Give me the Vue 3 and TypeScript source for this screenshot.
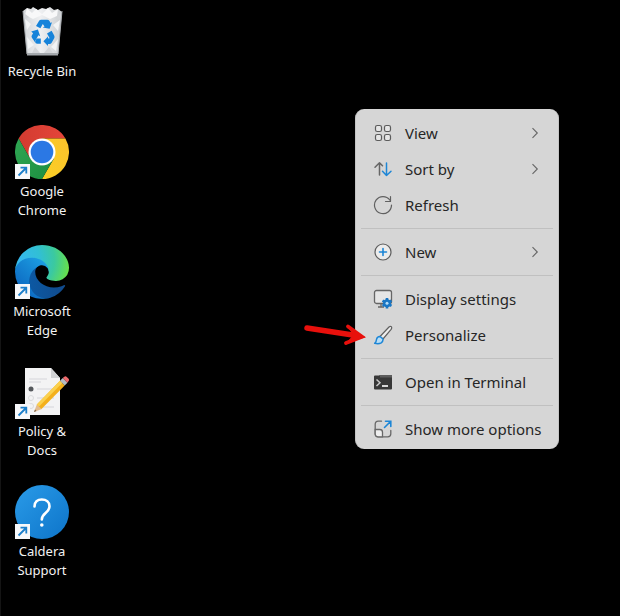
<script setup lang="ts">
interface Shortcut {
  id: string
  label: string
  linked: boolean
}

interface MenuItem {
  id: string
  label: string
  submenu?: boolean
}

const shortcuts: Shortcut[] = [
  { id: 'bin', label: 'Recycle Bin', linked: false },
  { id: 'chrome', label: 'Google Chrome', linked: true },
  { id: 'edge', label: 'Microsoft Edge', linked: true },
  { id: 'docs', label: 'Policy & Docs', linked: true },
  { id: 'support', label: 'Caldera Support', linked: true },
]

const menuGroups: MenuItem[][] = [
  [
    { id: 'view', label: 'View', submenu: true },
    { id: 'sort', label: 'Sort by', submenu: true },
    { id: 'refresh', label: 'Refresh' },
  ],
  [{ id: 'new', label: 'New', submenu: true }],
  [
    { id: 'display', label: 'Display settings' },
    { id: 'personalize', label: 'Personalize' },
  ],
  [{ id: 'terminal', label: 'Open in Terminal' }],
  [{ id: 'more', label: 'Show more options' }],
]
</script>

<template>
  <main class="desktop">
    <nav class="shortcuts">
      <button v-for="s in shortcuts" :key="s.id" type="button" class="shortcut">
        <span class="picture">
          <svg v-if="s.id === 'bin'" viewBox="0 0 54 54" aria-hidden="true">
            <defs>
              <linearGradient id="binBody" x1="0" y1="0" x2="1" y2="0">
                <stop offset="0" stop-color="#d3d6d9" />
                <stop offset=".45" stop-color="#eff0f2" />
                <stop offset="1" stop-color="#cbced1" />
              </linearGradient>
            </defs>
            <path d="M8 6l4-3 4 1 2-2 5 3 4-2 4 1 4-2 4 3 4-1 4 3-4 43H12z" fill="url(#binBody)" />
            <path d="M12 3l5 5 4-4 6 5 6-6 4 5 6-4-1 7-7 3-8-4-9 4-8-4z" fill="#f8f8f9" />
            <path d="M10 14l6 5-4 6zM45 15l-7 5 5 6zM12 32l7 8-6 4zM43 34l-7 8 5 4z" fill="#f3f4f5" />
            <path d="M9 8l5 4-4 2zM46 8l-6 5 5 2zM20 42l5 6h-8zM34 42l-5 6h9z" fill="#d3d5d8" />
            <path d="M8 6l4 43M47 6l-4 43" stroke="#a8acb0" fill="none" />
            <path d="M12 48h31v2.500H12z" fill="#a4a8ac" />
            <g fill="#1683da">
              <path d="M21 21l3-5q.7-1.200 2.200-1.200h6q1.500 0 2.300 1.300l1 1.900 1.500-.8-2.400 6.600-6.800-1.200 1.700-1-1.700-2.600-2.400 4.300z" />
              <path d="M16.200 26.500l6.700-1.900 2.300 6.600-1.800-.9-2.700 4.700q-.8 1.500-.2 3l-3.600-5.200q-.8-1.300 0-2.600l1.200-2z" />
              <path d="M21.500 33.500h4.300v5.300h-3.600q-2 0-2-2z" />
              <path d="M32 28.500l4.600-2.700 2.600 4.600q.8 1.400 0 2.800L36.500 38q-.7 1-2 1H33v2l-4.600-4.800L33 31.400v2l1.700-.2z" />
            </g>
          </svg>

          <svg v-else-if="s.id === 'chrome'" viewBox="0 0 54 54" aria-hidden="true">
            <defs>
              <linearGradient id="crRed" x1="0" y1="0" x2="1" y2="0">
                <stop offset="0" stop-color="#d33b30" />
                <stop offset="1" stop-color="#e4453a" />
              </linearGradient>
              <linearGradient id="crGreen" x1="0" y1="0" x2="1" y2="1">
                <stop offset="0" stop-color="#2fa653" />
                <stop offset="1" stop-color="#1c8e40" />
              </linearGradient>
              <linearGradient id="crYellow" x1="1" y1="0" x2="0" y2="1">
                <stop offset="0" stop-color="#fcc22c" />
                <stop offset="1" stop-color="#fbd024" />
              </linearGradient>
            </defs>
            <path d="M3.600 13.500A27 27 0 0 1 50.400 13.500H27L15.300 33.800z" fill="url(#crRed)" />
            <path d="M50.400 13.500A27 27 0 0 1 27 54L38.700 33.700 27 13.500z" fill="url(#crYellow)" />
            <path d="M27 54A27 27 0 0 1 3.600 13.500L15.300 33.800 27 40.500l11.700-6.800z" fill="url(#crGreen)" />
            <circle cx="27" cy="27" r="13.500" fill="#fff" />
            <circle cx="27" cy="27" r="11.300" fill="#2b78e4" />
          </svg>

          <svg v-else-if="s.id === 'edge'" viewBox="0 0 256 256" aria-hidden="true">
            <defs>
              <linearGradient id="edDark" x1="63" y1="177" x2="242" y2="177" gradientUnits="userSpaceOnUse">
                <stop offset="0" stop-color="#0c59a4" />
                <stop offset="1" stop-color="#114a8b" />
              </linearGradient>
              <linearGradient id="edBlue" x1="157" y1="100" x2="46" y2="222" gradientUnits="userSpaceOnUse">
                <stop offset="0" stop-color="#1b9de2" />
                <stop offset=".4" stop-color="#1688d4" />
                <stop offset="1" stop-color="#0d6cc4" />
              </linearGradient>
              <radialGradient id="edTop" cx="26" cy="70" r="230" gradientUnits="userSpaceOnUse">
                <stop offset="0" stop-color="#35b8ee" />
                <stop offset=".4" stop-color="#31bfd5" />
                <stop offset=".7" stop-color="#3bc9a0" />
                <stop offset="1" stop-color="#66e04d" />
              </radialGradient>
            </defs>
            <path d="M231 190.500a94 94 0 0 1-10.500 4.700 102 102 0 0 1-36 6.500c-47.500 0-88.800-32.700-88.800-74.600a31.600 31.600 0 0 1 16.500-27.500c-43 1.800-54 46.600-54 72.800 0 74.200 68.400 81.800 83.100 81.800 8 0 20-2.300 27.200-4.600l1.300-.4a128 128 0 0 0 66.600-52.800 4 4 0 0 0-5.400-5.900z" fill="url(#edDark)" />
            <path d="M105.700 241.400a79 79 0 0 1-22.700-21.300 81 81 0 0 1 29.500-120.600c3.100-1.500 8.500-4.100 15.600-4a32 32 0 0 1 25.700 13 32 32 0 0 1 6.300 18.600c0-.2 24.500-79.600-80-79.600C36.100 47.500 0 89.200 0 125.700a131 131 0 0 0 12.200 56 128 128 0 0 0 156.400 67 75.500 75.500 0 0 1-62.800-7.300z" fill="url(#edBlue)" />
            <path d="M152.300 148.900c-.8 1-3.300 2.500-3.300 5.600 0 2.600 1.700 5.100 4.700 7.200 14.300 10 41.400 8.700 41.500 8.700a59.500 59.500 0 0 0 30.300-8.400A61.400 61.400 0 0 0 256 109.100c.3-22.400-8-37.300-11.300-43.900C223.500 23.900 177.700 0 128 0A128 128 0 0 0 0 126.200c.5-36.500 36.800-66 80-66 3.500 0 23.500.3 42 10.100 16.300 8.600 24.900 18.900 30.800 29.200 6.200 10.700 7.300 24.200 7.300 29.500 0 5.400-2.700 13.400-7.800 19.900z" fill="url(#edTop)" />
          </svg>

          <svg v-else-if="s.id === 'docs'" viewBox="0 0 54 54" aria-hidden="true">
            <path d="M10 3h26l9 10v37H10z" fill="#f3f3f4" />
            <path d="M36 3l9 10h-9z" fill="#d0d2d4" />
            <path d="M14 14h18M22 24h16M22 33h17M22 42h17M14 17h12" stroke="#dfe0e2" stroke-width="1.300" />
            <circle cx="16" cy="24" r="2.500" fill="#55585c" />
            <g fill="none" stroke="#dbdcde">
              <circle cx="16" cy="33" r="2.500" />
              <circle cx="16" cy="41" r="2.500" />
            </g>
            <path d="M19 47l3-8 5 5z" fill="#e3bd90" />
            <path d="M19 47l1-2.600 1.500 1.500z" fill="#7a6048" />
            <path d="M21.800 39.400L45 15.800l4.700 4.700L26.500 44z" fill="#f3b01c" />
            <path d="M21.800 39.400L45 15.800l2.300 2.300L24 41.600z" fill="#fbd14e" />
            <path d="M45 15.800l2.800-2.700 4.600 4.600-2.700 2.800z" fill="#b5bcc2" />
            <path d="M47.800 13.100l1.500-1.400q1.300-1 2.500.2l1.600 1.600q1.200 1.300.2 2.600l-1.200 1.600z" fill="#ee6a6c" />
          </svg>

          <svg v-else viewBox="0 0 54 54" aria-hidden="true">
            <defs>
              <linearGradient id="helpDisc" x1="0" y1="0" x2="1" y2="1">
                <stop offset="0" stop-color="#2a9be8" />
                <stop offset="1" stop-color="#0d74c9" />
              </linearGradient>
            </defs>
            <circle cx="27" cy="27" r="27" fill="url(#helpDisc)" />
            <path d="M19.500 21.500c0-4.500 3-7 7.300-7s7.700 2.600 7.700 6.800c0 6.700-7.700 6.700-7.700 13.200" fill="none" stroke="#fff" stroke-width="2.600" stroke-linecap="round" />
            <circle cx="26.800" cy="40" r="1.800" fill="#fff" />
          </svg>

          <svg v-if="s.linked" class="link-badge" viewBox="0 0 15 15" aria-hidden="true">
            <path d="M0 0h15v15H0z" fill="#f7f8fa" />
            <path d="M3.500 11.500L11 4M5.500 3.700h5.800v5.800" fill="none" stroke="#1c7fcb" stroke-width="1.800" />
          </svg>
        </span>
        <span class="caption">{{ s.label }}</span>
      </button>
    </nav>

    <div class="menu" role="menu">
      <div v-for="(group, g) in menuGroups" :key="g" class="group" role="group">
        <button v-for="item in group" :key="item.id" type="button" class="item" role="menuitem">
          <svg class="glyph" viewBox="0 0 20 20" aria-hidden="true">
            <g v-if="item.id === 'view'" fill="#e6e6e6" stroke="#5c5c5c" stroke-width="1.200">
              <rect x="2.500" y="2.500" width="6" height="6" rx="1.800" />
              <rect x="11.500" y="2.500" width="6" height="6" rx="1.800" />
              <rect x="2.500" y="11.500" width="6" height="6" rx="1.800" />
              <rect x="11.500" y="11.500" width="6" height="6" rx="1.800" />
            </g>
            <g v-else-if="item.id === 'sort'" fill="none" stroke-width="1.500" stroke-linecap="round" stroke-linejoin="round">
              <path d="M6.500 16V4M2 8.200L6.500 3.700 9.500 6.700" stroke="#666" />
              <path d="M13.500 4v12.500M9.500 12.300l4 4.200 4.500-4.200" stroke="#1d86d6" />
            </g>
            <g v-else-if="item.id === 'refresh'" fill="none" stroke="#606060" stroke-width="1.200" stroke-linecap="round" stroke-linejoin="round">
              <path d="M18.500 10A8.500 8.500 0 1 1 16.800 5" />
              <path d="M17.500 1.500v5h-5" />
            </g>
            <g v-else-if="item.id === 'new'" fill="none" stroke-linecap="round">
              <circle cx="10" cy="10" r="8" fill="#ececec" stroke="#5c5c5c" stroke-width="1.200" />
              <path d="M10 6.500v7M6.500 10h7" stroke="#1d86d6" stroke-width="1.600" />
            </g>
            <g v-else-if="item.id === 'display'">
              <rect x="1.500" y="1.500" width="17" height="13" rx="2" fill="#e6e6e6" stroke="#666" stroke-width="1.300" />
              <path d="M8 14.500v3M5 18h6" fill="none" stroke="#666" stroke-width="1.300" />
              <path d="M14 9v10.400M9.500 11.600l9 5.200M18.500 11.600l-9 5.200" stroke="#1976c4" stroke-width="2.600" />
              <circle cx="14" cy="14.200" r="3.900" fill="#1976c4" />
              <circle cx="14" cy="14.200" r="1.500" fill="#b4dcf7" />
            </g>
            <g v-else-if="item.id === 'personalize'" stroke-width="1.200" stroke-linejoin="round" stroke-linecap="round">
              <path d="M7 11.500L16 2q1.400-1.200 2.300-.3t-.2 2.600L10 14z" fill="#ededed" stroke="#606060" />
              <path d="M7 11.500q-3 0-3.500 3-.2 2.500-1.800 3.800 4 1 6.500-.5 2-1.300 1.800-3.800z" fill="#b9def6" stroke="#1d86d6" stroke-width="1.500" />
            </g>
            <g v-else-if="item.id === 'terminal'">
              <path d="M1 4.500q0-1 1-1h4.500V3H18q1 0 1 1v12.500q0 1-1 1H2q-1 0-1-1z" fill="#383838" />
              <path d="M7 3h11q1 0 1 1v1.500H7z" fill="#5d5d5d" />
              <path d="M3.500 7.500L7 10.700 3.500 14" fill="none" stroke="#c8c8c8" stroke-width="1.500" />
              <path d="M9 14h6" stroke="#fff" stroke-width="1.600" />
            </g>
            <g v-else fill="none" stroke="#686868" stroke-width="1.300" stroke-linecap="round">
              <path d="M8.500 2.200H5.200q-3 0-3 3v9.600q0 3 3 3h9.600q3 0 3-3V11.500" />
              <path d="M2.200 10.500h4.600q2.700 0 2.700 2.700v4.600H5.200q-3 0-3-3z" fill="#eee" />
              <path d="M11.500 8.500L17.500 2.500M12.500 2.200h5.300v5.300" stroke="#1d86d6" stroke-width="1.600" />
            </g>
          </svg>
          <span class="label">{{ item.label }}</span>
          <svg v-if="item.submenu" class="chevron" viewBox="0 0 12 12" aria-hidden="true">
            <path d="M3.500 1.200L8.300 6 3.500 10.800" fill="none" stroke="#666" stroke-width="1.100" />
          </svg>
        </button>
      </div>
    </div>

    <svg class="pointer" viewBox="0 0 64 26" aria-hidden="true">
      <path d="M5 7L54 14.500" fill="none" stroke="#e8100c" stroke-width="5.500" stroke-linecap="round" />
      <path d="M46 5.500L60 15.800 44 22" fill="none" stroke="#e8100c" stroke-width="3.800" stroke-linecap="round" />
      <path d="M46 6L63.500 16.300 44 22.500 51 14z" fill="#e8100c" />
    </svg>
  </main>
</template>

<style>
html,
body {
  background: #000;
}
</style>

<style scoped>
.desktop {
  position: relative;
  box-sizing: border-box;
  min-height: 100vh;
  overflow: hidden;
  background: #000;
  box-shadow: inset 1px 0 #141414;
  font-family: "Noto Sans", "Open Sans", sans-serif;
}

.shortcuts {
  display: flex;
  flex-direction: column;
  align-items: flex-start;
}

.shortcut {
  display: flex;
  flex-direction: column;
  align-items: center;
  gap: 3px;
  box-sizing: border-box;
  width: 84px;
  height: 120px;
  padding: 5px 4px 0;
  border: 0;
  background: none;
  color: #f2f2f2;
  font: inherit;
  font-size: 13px;
  line-height: 19px;
}

.picture {
  position: relative;
  width: 54px;
  height: 54px;
}

.picture svg {
  display: block;
  width: 100%;
  height: 100%;
}

.picture .link-badge {
  position: absolute;
  left: 0;
  bottom: 0;
  width: 15px;
  height: 15px;
}

.caption {
  max-width: 74px;
  text-align: center;
}

.menu {
  position: absolute;
  top: 109px;
  left: 355px;
  box-sizing: border-box;
  width: 204px;
  padding: 6px 5px 2px;
  border: 1px solid #c4c4c4;
  border-width: 0 1px;
  border-radius: 9px;
  background: #d6d6d6;
}

.group + .group {
  margin-top: 5px;
  padding-top: 5px;
  border-top: 1px solid #c0c0c0;
}

.item {
  display: flex;
  align-items: center;
  gap: 12px;
  box-sizing: border-box;
  width: 100%;
  height: 36px;
  padding: 0 12px;
  border: 0;
  background: none;
  color: #262626;
  font: inherit;
  font-size: 15px;
  line-height: 20px;
  text-align: left;
  white-space: nowrap;
}

.glyph {
  flex: none;
  width: 20px;
  height: 20px;
}

.label {
  flex: 1;
}

.chevron {
  flex: none;
  width: 12px;
  height: 12px;
}

.pointer {
  position: absolute;
  top: 321px;
  left: 302px;
  width: 64px;
  height: 26px;
}
</style>
